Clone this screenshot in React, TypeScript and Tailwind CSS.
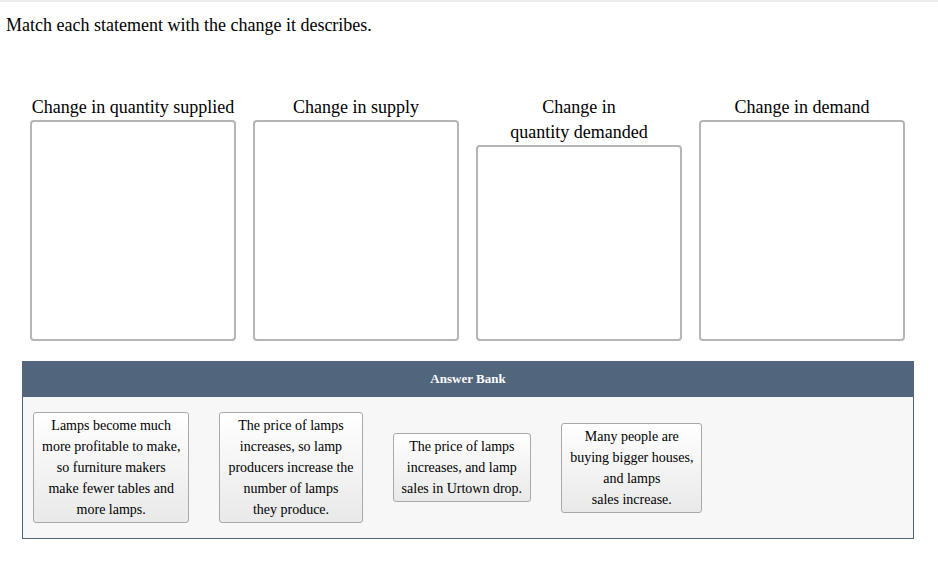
const serif = { fontFamily: '"Liberation Serif", "Times New Roman", serif' };

const targets = [
  { label: ["Change in quantity supplied"] },
  { label: ["Change in supply"] },
  { label: ["Change in", "quantity demanded"] },
  { label: ["Change in demand"] },
];

const answers = [
  [
    "Lamps become much",
    "more profitable to make,",
    "so furniture makers",
    "make fewer tables and",
    "more lamps.",
  ],
  [
    "The price of lamps",
    "increases, so lamp",
    "producers increase the",
    "number of lamps",
    "they produce.",
  ],
  ["The price of lamps", "increases, and lamp", "sales in Urtown drop."],
  ["Many people are", "buying bigger houses,", "and lamps", "sales increase."],
];

function DropColumn({ label }: { label: string[] }) {
  return (
    <div className="flex w-[206px] flex-col">
      <div className="text-center text-[18px] leading-[25px] text-black">
        {label.map((line) => (
          <div key={line}>{line}</div>
        ))}
      </div>
      <div className="flex-1 rounded-[4px] border-2 border-[#b5b5b5] bg-white" />
    </div>
  );
}

function AnswerCard({ lines }: { lines: string[] }) {
  return (
    <div className="rounded-[3px] border border-[#a9a9a9] bg-gradient-to-b from-white to-[#e9e9e9] px-[8px] py-[2px] text-center text-[14px] leading-[21px] whitespace-nowrap text-black">
      {lines.map((line) => (
        <div key={line}>{line}</div>
      ))}
    </div>
  );
}

export default function App() {
  return (
    <div className="min-h-[566px] w-[938px] border-t-2 border-[#ececec] bg-white" style={serif}>
      <p className="px-[6px] pt-[12px] text-[18px] leading-[22px] text-black">
        Match each statement with the change it describes.
      </p>

      <div className="mt-[59px] px-[22px]">
        <div className="flex h-[246px] gap-[17px] px-[8px]">
          {targets.map((t) => (
            <DropColumn key={t.label.join(" ")} label={t.label} />
          ))}
        </div>

        <div className="mt-[20px] w-[892px]">
          <div className="flex h-[36px] items-center justify-center bg-[#51657c] text-[13px] font-bold text-white">
            Answer Bank
          </div>
          <div className="flex min-h-[141px] items-center gap-[30px] border border-t-0 border-[#51657c] bg-[#f7f7f7] px-[10px] py-[15px]">
            {answers.map((lines) => (
              <AnswerCard key={lines[0] + lines[1]} lines={lines} />
            ))}
          </div>
        </div>
      </div>
    </div>
  );
}
